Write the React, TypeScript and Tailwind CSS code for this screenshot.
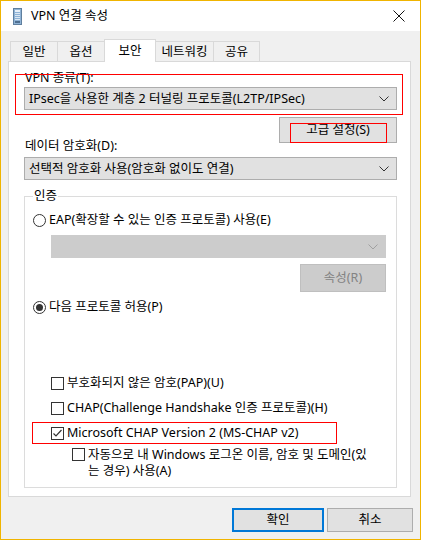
import React from "react";

const FONT = { fontFamily: '"Noto Sans", "Noto Sans CJK KR", sans-serif' };

const Chevron: React.FC<{ color?: string }> = ({ color = "#333" }) => (
  <svg width="10" height="6" viewBox="0 0 10 6" className="shrink-0">
    <path d="M0.5 0.5 L5 5 L9.5 0.5" fill="none" stroke={color} strokeWidth="1" />
  </svg>
);

const Select: React.FC<{ text?: string; disabled?: boolean; className?: string }> = ({
  text,
  disabled,
  className = "",
}) => (
  <div
    className={`h-[23px] flex items-center justify-between pl-[4px] pr-[7px] border ${
      disabled ? "bg-[#cccccc] border-[#cccccc]" : "bg-[#e1e1e1] border-[#adadad]"
    } ${className}`}
  >
    <span className="whitespace-nowrap leading-[16px]">{text}</span>
    <Chevron color={disabled ? "#a0a0a0" : "#333"} />
  </div>
);

const Radio: React.FC<{ checked?: boolean }> = ({ checked }) => (
  <span className="w-[13px] h-[13px] rounded-full border border-[#333] bg-white flex items-center justify-center shrink-0">
    {checked && <span className="w-[7px] h-[7px] rounded-full bg-[#333]" />}
  </span>
);

const Check: React.FC<{ checked?: boolean }> = ({ checked }) => (
  <span className="w-[13px] h-[13px] border border-[#333] bg-white flex items-center justify-center shrink-0">
    {checked && (
      <svg width="11" height="11" viewBox="0 0 11 11">
        <path d="M1.5 5.5 L4 8 L9.5 2" fill="none" stroke="#333" strokeWidth="1.2" />
      </svg>
    )}
  </span>
);

const tabs = [
  { label: "일반", w: "w-[48px]" },
  { label: "옵션", w: "w-[48px]" },
  { label: "보안", w: "w-[52px]", active: true },
  { label: "네트워킹", w: "w-[59px]" },
  { label: "공유", w: "w-[47px]" },
];

export default function App() {
  return (
    <div
      style={FONT}
      className="w-[421px] h-[540px] border border-[#f0b400] bg-[#f0f0f0] text-[12.5px] text-black flex flex-col overflow-hidden"
    >
      {/* title bar */}
      <div className="h-[30px] bg-white flex items-center shrink-0">
        <svg width="9" height="17" viewBox="0 0 9 17" className="ml-[12px]">
          <rect x="0.5" y="0.5" width="8" height="16" fill="#8fb3d6" stroke="#5f7f9e" />
          <rect x="2" y="2" width="5" height="2" fill="#e8f0f8" />
          <rect x="2" y="5" width="5" height="1" fill="#dbe7f2" />
          <rect x="2" y="7" width="5" height="1" fill="#dbe7f2" />
          <rect x="2" y="9" width="5" height="1" fill="#dbe7f2" />
          <rect x="2" y="11" width="5" height="1" fill="#dbe7f2" />
          <rect x="2" y="13" width="5" height="2" fill="#4f6f90" />
        </svg>
        <span className="ml-[9px] leading-[16px]">VPN 연결 속성</span>
        <svg width="12" height="12" viewBox="0 0 12 12" className="ml-auto mr-[15px]">
          <path d="M0.5 0.5 L11.5 11.5 M11.5 0.5 L0.5 11.5" stroke="#111" strokeWidth="1" />
        </svg>
      </div>

      {/* tabs */}
      <div className="flex items-end ml-[9px] mt-[8px] -mb-[1px] relative z-10 h-[23px]">
        {tabs.map((t, i) =>
          t.active ? (
            <div
              key={t.label}
              className={`${t.w} h-[23px] -ml-[1px] bg-white border-t border-l border-r border-[#d9d9d9] flex items-start pt-[3px] justify-center leading-[16px]`}
            >
              {t.label}
            </div>
          ) : (
            <div
              key={t.label}
              className={`${t.w} h-[21px] ${i === 0 ? "" : "-ml-[1px]"} bg-[#f0f0f0] border border-[#d9d9d9] flex items-center justify-center leading-[16px]`}
            >
              {t.label}
            </div>
          )
        )}
      </div>

      {/* panel */}
      <div className="relative ml-[7px] w-[403px] h-[436px] bg-white border border-[#d9d9d9] pl-[15px] pr-[13px] flex flex-col">
        <div className="absolute left-[6px] top-[12px] w-[388px] h-[41px] border border-[#ff0000]" />
        <div className="mt-[8px] ml-[1px] leading-[16px]">VPN 종류(T):</div>
        <Select className="mt-[1px]" text="IPsec을 사용한 계층 2 터널링 프로토콜(L2TP/IPSec)" />

        <div className="flex justify-between h-[37px] mt-[7px]">
          <span className="self-end ml-[1px] leading-[16px]">데이터 암호화(D):</span>
          <div className="relative w-[118px] h-[26px] bg-[#e1e1e1] border border-[#adadad] flex items-center justify-center leading-[16px]">
            고급 설정(S)
            <div className="absolute left-[10px] top-[5px] w-[97px] h-[20px] border border-[#ff0000]" />
          </div>
        </div>
        <Select className="mt-[3px]" text="선택적 암호화 사용(암호화 없이도 연결)" />

        {/* group box */}
        <div className="relative mt-[16px] h-[292px] border border-[#dcdcdc] pl-[8px] pr-[10px] flex flex-col">
          <span className="absolute left-[8px] -top-[9px] bg-white px-[1px] leading-[16px]">인증</span>
          <div className="mt-[15px] flex items-center gap-[3px] h-[16px]">
            <Radio />
            <span className="leading-[16px]">EAP(확장할 수 있는 인증 프로토콜) 사용(E)</span>
          </div>
          <Select disabled className="mt-[7px] ml-[18px]" />
          <div className="mt-[6px] self-end w-[86px] h-[28px] bg-[#cccccc] border border-[#bfbfbf] text-[#838383] flex items-center justify-center leading-[16px]">
            속성(R)
          </div>
          <div className="mt-[7px] flex items-center gap-[3px] h-[16px]">
            <Radio checked />
            <span className="leading-[16px]">다음 프로토콜 허용(P)</span>
          </div>

          <div className="mt-[60px] ml-[18px] flex flex-col gap-[9px]">
            <div className="flex items-center gap-[3px] h-[16px]">
              <Check />
              <span className="leading-[16px]">부호화되지 않은 암호(PAP)(U)</span>
            </div>
            <div className="flex items-center gap-[3px] h-[16px]">
              <Check />
              <span className="leading-[16px]">CHAP(Challenge Handshake 인증 프로토콜)(H)</span>
            </div>
            <div className="relative flex items-center gap-[3px] h-[16px]">
              <Check checked />
              <span className="leading-[16px]">Microsoft CHAP Version 2 (MS-CHAP v2)</span>
              <div className="absolute -left-[19px] -top-[3px] w-[305px] h-[22px] border border-[#ff0000]" />
            </div>
          </div>
          <div className="mt-[6px] ml-[39px] flex items-start gap-[3px]">
            <span className="mt-[1px]">
              <Check />
            </span>
            <span className="leading-[16px] whitespace-nowrap">
              자동으로 내 Windows 로그온 이름, 암호 및 도메인(있
              <br />는 경우) 사용(A)
            </span>
          </div>
        </div>
      </div>

      {/* buttons */}
      <div className="mt-[11px] flex justify-end gap-[3px] pr-[7px]">
        <div className="w-[92px] h-[24px] bg-[#e1e1e1] border-2 border-[#0078d7] flex items-center justify-center leading-[16px]">
          확인
        </div>
        <div className="w-[86px] h-[24px] bg-[#e1e1e1] border border-[#adadad] flex items-center justify-center leading-[16px]">
          취소
        </div>
      </div>
    </div>
  );
}
